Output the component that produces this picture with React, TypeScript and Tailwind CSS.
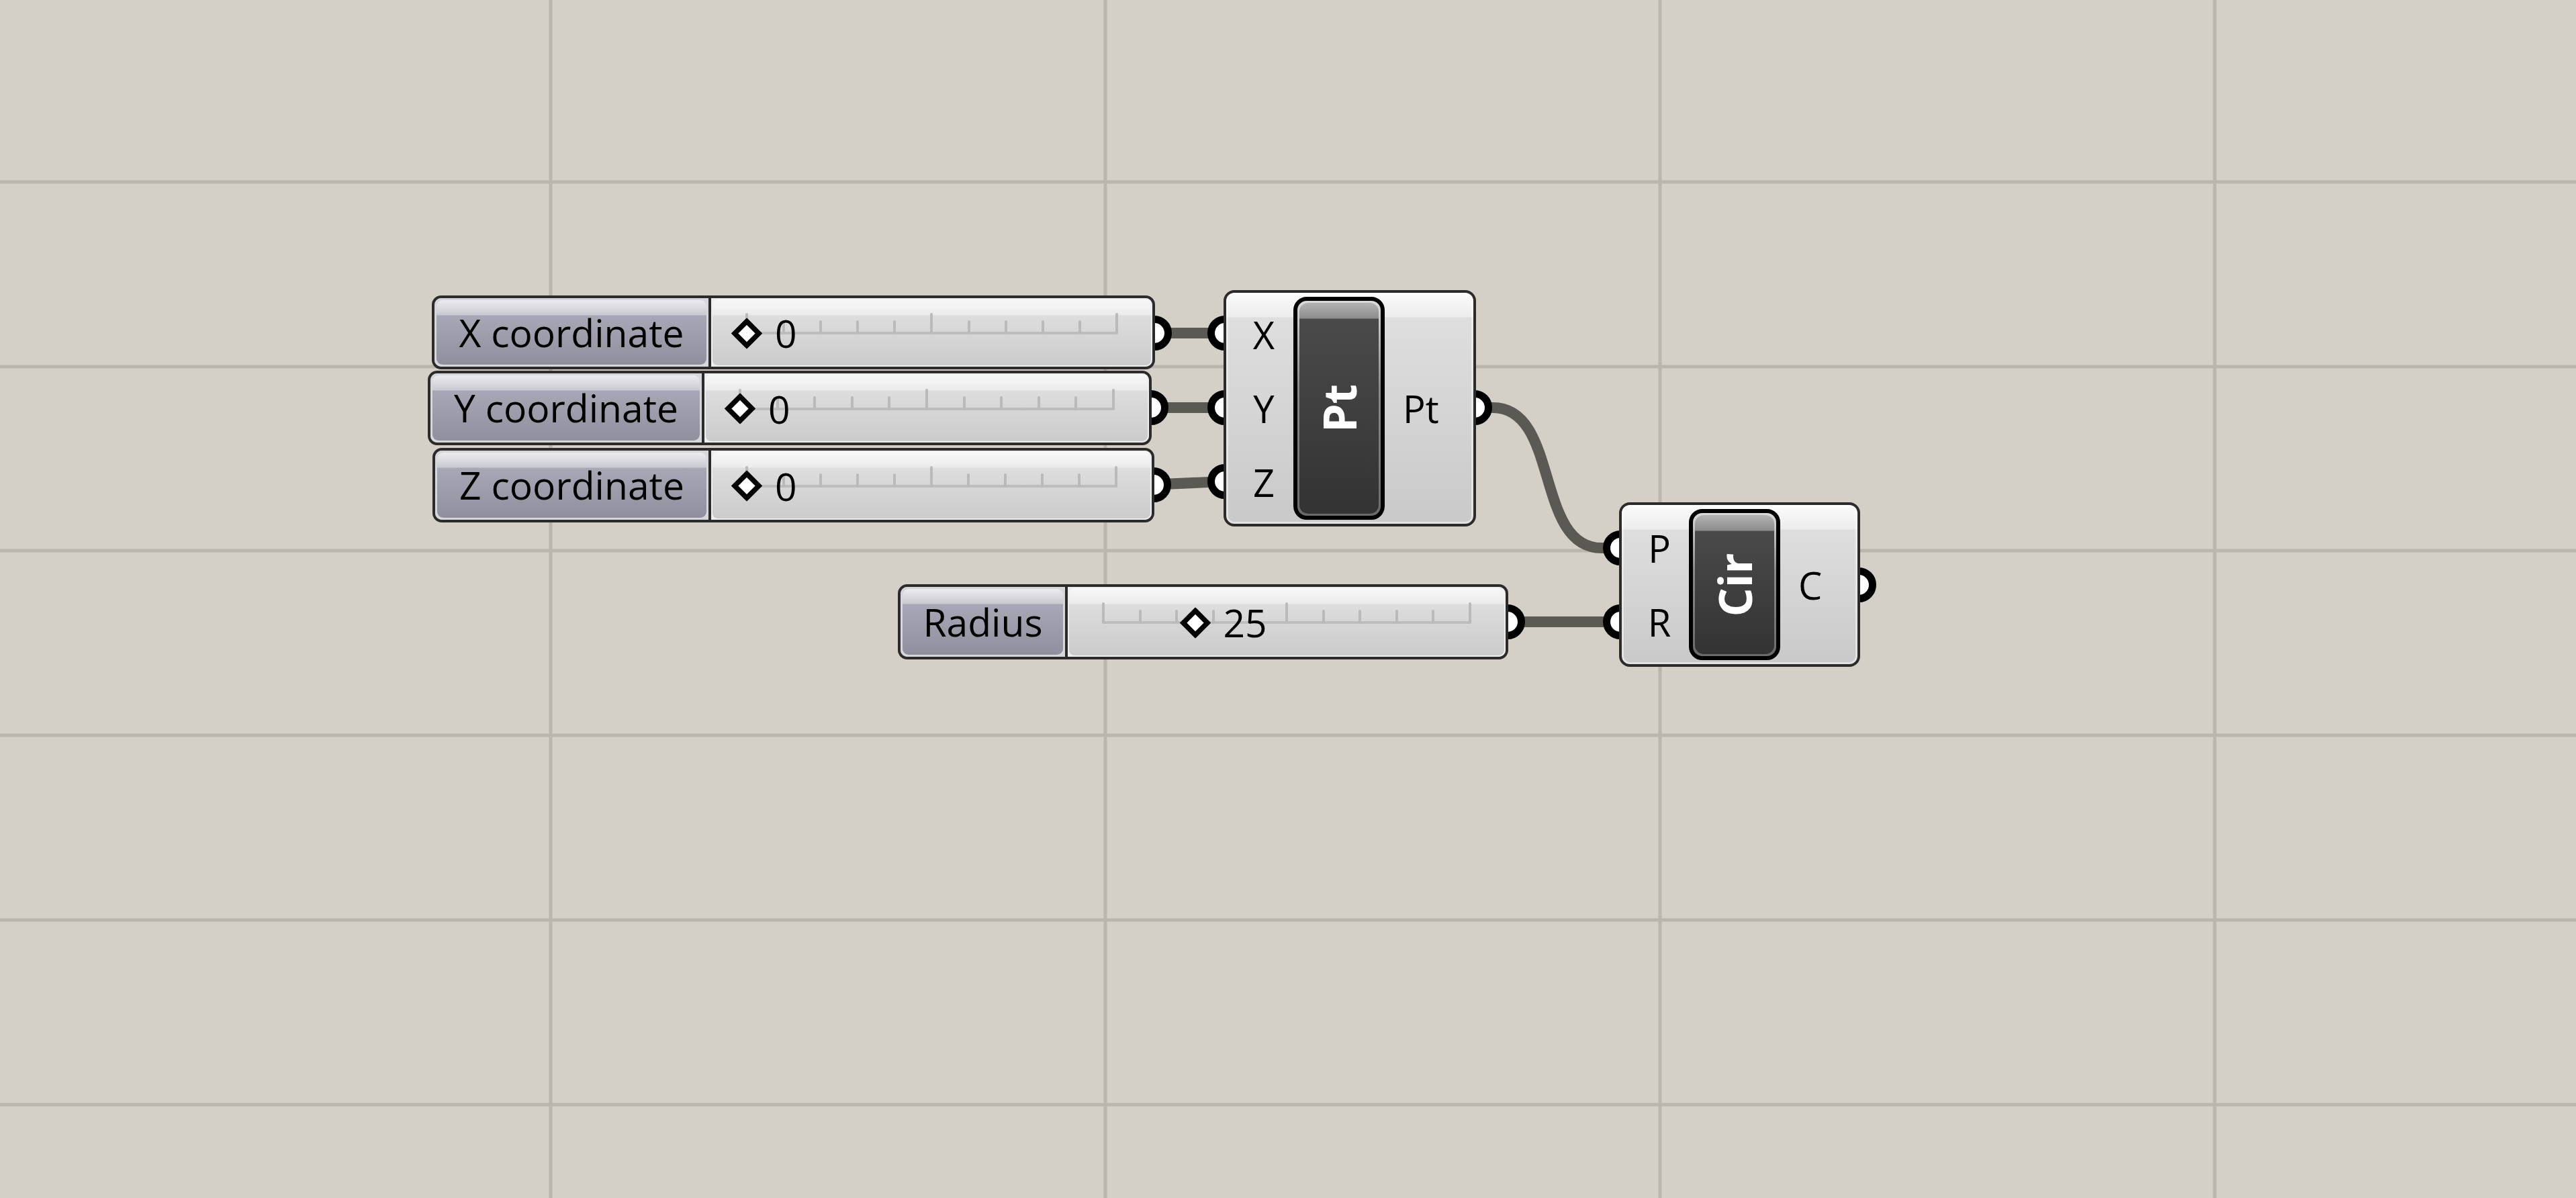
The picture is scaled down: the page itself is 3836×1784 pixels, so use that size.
import React from 'react';

// Grasshopper canvas: four number sliders wired into Pt and Cir components

const Grip = ({ pos }: { pos: string }) => (
  <div
    className={`absolute w-[52px] h-[52px] -translate-x-1/2 -translate-y-1/2 rounded-full border-[11px] border-black bg-white ${pos}`}
  />
);

const Tick = ({ big }: { big?: boolean }) => (
  <div className={big ? 'w-[4px] h-[32px] rounded-full bg-[#bababa]' : 'w-[4px] h-[21px] rounded-full bg-[#bababa]'} />
);

type SliderProps = {
  pos: string;
  labelW: string;
  label: string;
  value: string;
  valuePos: string;
};

function Slider({ pos, labelW, label, value, valuePos }: SliderProps) {
  return (
    <div className={`absolute flex overflow-hidden rounded-[14px] border-[4px] border-[#2b2b2b] ${pos}`}>
      {/* label part */}
      <div className={`h-full bg-[#d6d6db] p-[3px] ${labelW}`}>
        <div className="flex h-full items-center justify-center rounded-[9px] bg-[linear-gradient(to_bottom,#ececef_0px,#c9c9d1_22px,#a8a7b5_23px,#908f9e_100%)]">
          <span className="whitespace-nowrap text-[57px] leading-none text-black">{label}</span>
        </div>
      </div>
      <div className="h-full w-[4px] bg-[#2b2b2b]" />
      {/* slider part */}
      <div className="h-full flex-1 bg-[#eeeeee] p-[2px]">
        <div className="h-full rounded-[8px] bg-[linear-gradient(to_bottom,#f8f8f8_0px,#ebebeb_23px,#dddddd_24px,#cbcbcb_100%)] px-[51px]">
          <div className="relative h-full">
            <div className="absolute left-0 right-0 top-[calc(50%-1px)] h-[4px] rounded-full bg-[#bdbdbd]" />
            <div className="absolute left-[-2px] right-[-2px] bottom-[calc(50%-3px)] flex items-end justify-between">
              <Tick big />
              <Tick />
              <Tick />
              <Tick />
              <Tick />
              <Tick big />
              <Tick />
              <Tick />
              <Tick />
              <Tick />
              <Tick big />
            </div>
            <div className={`absolute top-[calc(50%+1px)] -ml-[23px] flex -translate-y-1/2 items-center ${valuePos}`}>
              <svg width="46" height="46" viewBox="0 0 46 46">
                <polygon points="23,5 41,23 23,41 5,23" fill="#ffffff" stroke="#000000" strokeWidth="7.5" />
              </svg>
              <span className="ml-[19px] text-[57px] leading-none text-black">{value}</span>
            </div>
          </div>
        </div>
      </div>
    </div>
  );
}

type CompProps = {
  pos: string;
  inputs: string[];
  output: string;
  name: string;
};

function Component({ pos, inputs, output, name }: CompProps) {
  return (
    <div
      className={`absolute flex rounded-[16px] border-[4px] border-[#2b2b2b] bg-[linear-gradient(to_bottom,#fbfbfb_0px,#ececec_36px,#dedede_37px,#c9c9c9_100%)] shadow-[inset_0_0_0_3px_rgba(255,255,255,0.45)] ${pos}`}
    >
      <div className="flex w-[100px] flex-col justify-center pl-[12px]">
        {inputs.map((p) => (
          <div key={p} className="flex h-[110px] items-center justify-center">
            <span className="text-[56px] leading-none text-black">{p}</span>
          </div>
        ))}
      </div>
      <div className="my-[6px] w-[136px] rounded-[20px] border-[6px] border-black bg-[linear-gradient(to_bottom,#dadada,#8a8a8a_40%,#6a6a6a)] p-[3px]">
        <div className="flex h-full items-center justify-center rounded-[13px] bg-[linear-gradient(to_bottom,#b3b3b3_0px,#8c8c8c_23px,#4a4a4a_24px,#333333_100%)]">
          <span className="-rotate-90 whitespace-nowrap text-[68px] font-bold leading-none text-white">{name}</span>
        </div>
      </div>
      <div className="flex flex-1 items-center pl-[27px]">
        <span className="text-[56px] leading-none text-black">{output}</span>
      </div>
    </div>
  );
}

export default function App() {
  return (
    <div className="relative h-[1784px] w-[3836px] overflow-hidden bg-[#d4d0c8] font-['Open_Sans',sans-serif]">
      {/* canvas grid and wires */}
      <svg className="absolute left-0 top-0" width="3836" height="1784">
        <g stroke="#bab6ae" strokeWidth="5">
          <line x1="820" y1="0" x2="820" y2="1784" />
          <line x1="1646" y1="0" x2="1646" y2="1784" />
          <line x1="2472" y1="0" x2="2472" y2="1784" />
          <line x1="3298" y1="0" x2="3298" y2="1784" />
          <line x1="0" y1="271" x2="3836" y2="271" />
          <line x1="0" y1="546" x2="3836" y2="546" />
          <line x1="0" y1="820" x2="3836" y2="820" />
          <line x1="0" y1="1095" x2="3836" y2="1095" />
          <line x1="0" y1="1370" x2="3836" y2="1370" />
          <line x1="0" y1="1645" x2="3836" y2="1645" />
        </g>
        <g stroke="#5a5954" strokeWidth="16" fill="none">
          <path d="M1710 496 L1830 496" />
          <path d="M1705 607 L1830 607" />
          <path d="M1710 722 L1822 717" />
          <path d="M2190 607 L2223 607 C2323 607 2285 816 2385 816 L2420 816" />
          <path d="M2235 926 L2420 926" />
        </g>
      </svg>

      {/* grips sit under the node bodies */}
      <Grip pos="left-[1719px] top-[496px]" />
      <Grip pos="left-[1714px] top-[607px]" />
      <Grip pos="left-[1718px] top-[722px]" />
      <Grip pos="left-[2245px] top-[926px]" />
      <Grip pos="left-[1824px] top-[496px]" />
      <Grip pos="left-[1824px] top-[607px]" />
      <Grip pos="left-[1824px] top-[717px]" />
      <Grip pos="left-[2196px] top-[607px]" />
      <Grip pos="left-[2413px] top-[816px]" />
      <Grip pos="left-[2413px] top-[926px]" />
      <Grip pos="left-[2768px] top-[871px]" />

      <Slider pos="left-[643px] top-[440px] w-[1077px] h-[110px]" labelW="w-[408px]" label="X coordinate" value="0" valuePos="left-0" />
      <Slider pos="left-[637px] top-[552px] w-[1078px] h-[111px]" labelW="w-[404px]" label="Y coordinate" value="0" valuePos="left-0" />
      <Slider pos="left-[644px] top-[667px] w-[1075px] h-[111px]" labelW="w-[407px]" label="Z coordinate" value="0" valuePos="left-0" />
      <Slider pos="left-[1337px] top-[870px] w-[909px] h-[112px]" labelW="w-[245px]" label="Radius" value="25" valuePos="left-[25%]" />

      <Component pos="left-[1822px] top-[432px] w-[376px] h-[352px]" inputs={['X', 'Y', 'Z']} output="Pt" name="Pt" />
      <Component pos="left-[2411px] top-[748px] w-[359px] h-[245px]" inputs={['P', 'R']} output="C" name="Cir" />
    </div>
  );
}
